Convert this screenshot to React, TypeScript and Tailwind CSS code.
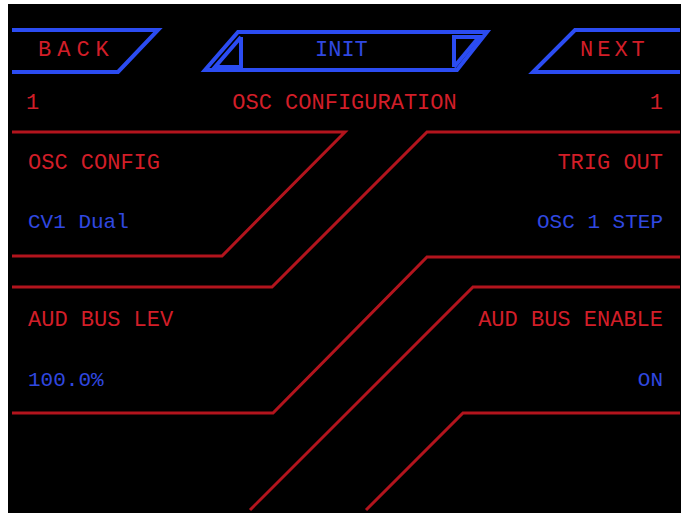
const mono = "font-['Liberation_Mono','DejaVu_Sans_Mono',monospace]"

const red = 'text-[#d21e28]'
const blue = 'text-[#3048e0]'

function LineArt() {
  return (
    <svg className="absolute inset-0 pointer-events-none" width="673" height="509" viewBox="0 0 673 509" fill="none">
      <g stroke="#2b4cf2" strokeWidth="4" strokeLinejoin="miter">
        <polyline points="4,26 150,26 110,68 4,68" />
        <polygon points="230,28 479,28 449,66 197,66" />
        <polyline points="233,33 233,63 207,63 233,33" />
        <polyline points="446,63 446,33 471,33 446,63" />
        <polyline points="672,26 567,26 525,68 672,68" />
      </g>
      <g stroke="#b3141d" strokeWidth="3">
        <polyline points="4,128 337,128 214,252 4,252" />
        <polyline points="4,283 264,283 419,128 672,128" />
        <polyline points="4,409 265,409 419,253 672,253" />
        <polyline points="672,283 465,283 242,506" />
        <polyline points="672,409 455,409 358,506" />
      </g>
    </svg>
  )
}

function Setting({ label, value, gap, end }: { label: string; value: string; gap: string; end?: boolean }) {
  return (
    <div className={`flex flex-col ${end ? 'items-end' : ''}`}>
      <span className={`h-[24px] flex items-center text-[22px] leading-none ${red}`}>{label}</span>
      <span className={`h-[24px] ${gap} flex items-center text-[21px] leading-none ${blue}`}>{value}</span>
    </div>
  )
}

export default function App() {
  return (
    <div className="w-[687px] h-[518px] bg-white pt-[4px] pl-[8px]">
      <div className={`relative w-[673px] h-[509px] bg-black overflow-hidden ${mono}`}>
        <LineArt />
        <div className="relative flex flex-col">
          <div className="flex items-center h-[42px] mt-[26px] pl-[30px]">
            <span className={`w-[277px] text-[22px] leading-none tracking-[6px] ${red}`}>BACK</span>
            <span className={`w-[265px] text-[22px] leading-none ${blue}`}>INIT</span>
            <span className={`text-[22px] leading-none tracking-[4px] ${red}`}>NEXT</span>
          </div>
          <div className={`flex items-center justify-between h-[24px] mt-[20px] pl-[18px] pr-[18px] text-[22px] leading-none ${red}`}>
            <span>1</span>
            <span>OSC CONFIGURATION</span>
            <span>1</span>
          </div>
          <div className="flex justify-between pl-[20px] pr-[18px] mt-[36px]">
            <Setting label="OSC CONFIG" value="CV1 Dual" gap="mt-[34px]" />
            <Setting label="TRIG OUT" value="OSC 1 STEP" gap="mt-[34px]" end />
          </div>
          <div className="flex justify-between pl-[20px] pr-[18px] mt-[75px]">
            <Setting label="AUD BUS LEV" value="100.0%" gap="mt-[35px]" />
            <Setting label="AUD BUS ENABLE" value="ON" gap="mt-[35px]" end />
          </div>
        </div>
      </div>
    </div>
  )
}
